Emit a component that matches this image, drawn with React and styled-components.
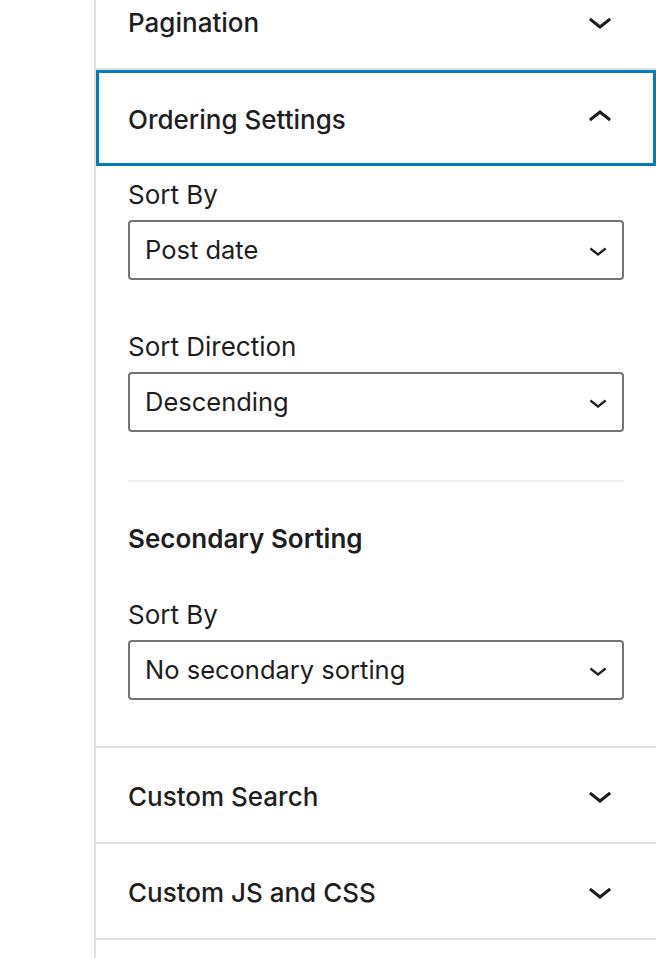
import React from "react";
import styled, { createGlobalStyle } from "styled-components";

const GlobalStyle = createGlobalStyle`
  html, body {
    margin: 0;
    padding: 0;
    background: #fff;
    overflow: hidden;
  }
  body {
    font-family: Inter, "Noto Sans", "Liberation Sans", sans-serif;
    color: #1e1e1e;
    -webkit-font-smoothing: antialiased;
  }
`;

const Page = styled.div`
  display: flex;
  min-height: 100vh;
`;

const Gutter = styled.div`
  width: 94px;
  flex-shrink: 0;
  border-right: 2px solid #e0e0e0;
`;

const Sidebar = styled.div`
  flex: 1;
  margin-top: -26px;
  display: flex;
  flex-direction: column;
`;

const Panel = styled.section`
  border-bottom: ${(props) => (props.$open ? "0" : "2px solid #e0e0e0")};
`;

const PanelHeader = styled.button`
  display: flex;
  align-items: center;
  justify-content: space-between;
  width: 100%;
  height: ${(props) => (props.$focused ? "96px" : "94px")};
  padding: 2px 32px 0;
  border: 0;
  background: #fff;
  font-family: inherit;
  font-size: 26px;
  font-weight: 500;
  color: #1e1e1e;
  text-align: left;
  cursor: pointer;
  box-shadow: ${(props) => (props.$focused ? "inset 0 0 0 3px #007cba" : "none")};

  svg {
    margin-top: -2px;
  }
`;

const PanelBody = styled.div`
  padding: 13px 32px 46px;
  border-bottom: 2px solid #e0e0e0;
`;

const Field = styled.div`
  display: flex;
  flex-direction: column;
  margin-top: ${(props) => props.$gap || 0}px;
`;

const Label = styled.label`
  font-size: 26px;
  line-height: 32px;
  margin-bottom: 9px;
  color: #1e1e1e;
`;

const Select = styled.div`
  display: flex;
  align-items: center;
  justify-content: space-between;
  height: 60px;
  box-sizing: border-box;
  border: 2px solid #757575;
  border-radius: 4px;
  padding: 0 6px 0 15px;
  font-size: 25.5px;
  color: #1e1e1e;
  cursor: pointer;

  span {
    margin-top: -2px;
  }
`;

const Divider = styled.hr`
  margin: 48px 0 0;
  border: 0;
  border-top: 2px solid #f0f0f0;
`;

const SubHeading = styled.h3`
  margin: 39px 0 0;
  font-size: 26px;
  line-height: 36px;
  font-weight: 600;
  color: #1e1e1e;
`;

const ChevronDown = ({ size = 48 }) => (
  <svg width={size} height={size} viewBox="0 0 24 24" fill="#1e1e1e">
    <path d="M17.5 11.6L12 16l-5.5-4.4.9-1.2L12 14l4.6-3.6 1 1.2z" />
  </svg>
);

const ChevronUp = ({ size = 48 }) => (
  <svg width={size} height={size} viewBox="0 0 24 24" fill="#1e1e1e">
    <path d="M6.5 12.4L12 8l5.5 4.4-.9 1.2L12 10l-4.6 3.6-1-1.2z" />
  </svg>
);

const SelectField = ({ label, value, gap }) => (
  <Field $gap={gap}>
    <Label>{label}</Label>
    <Select>
      <span>{value}</span>
      <ChevronDown size={36} />
    </Select>
  </Field>
);

const ClosedPanel = ({ title }) => (
  <Panel>
    <PanelHeader>
      <span>{title}</span>
      <ChevronDown />
    </PanelHeader>
  </Panel>
);

export default function App() {
  return (
    <>
      <GlobalStyle />
      <Page>
        <Gutter />
        <Sidebar>
          <ClosedPanel title="Pagination" />
          <Panel $open>
            <PanelHeader $focused>
              <span>Ordering Settings</span>
              <ChevronUp />
            </PanelHeader>
            <PanelBody>
              <SelectField label="Sort By" value="Post date" />
              <SelectField label="Sort Direction" value="Descending" gap={51} />
              <Divider />
              <SubHeading>Secondary Sorting</SubHeading>
              <SelectField label="Sort By" value="No secondary sorting" gap={42} />
            </PanelBody>
          </Panel>
          <ClosedPanel title="Custom Search" />
          <ClosedPanel title="Custom JS and CSS" />
        </Sidebar>
      </Page>
    </>
  );
}
